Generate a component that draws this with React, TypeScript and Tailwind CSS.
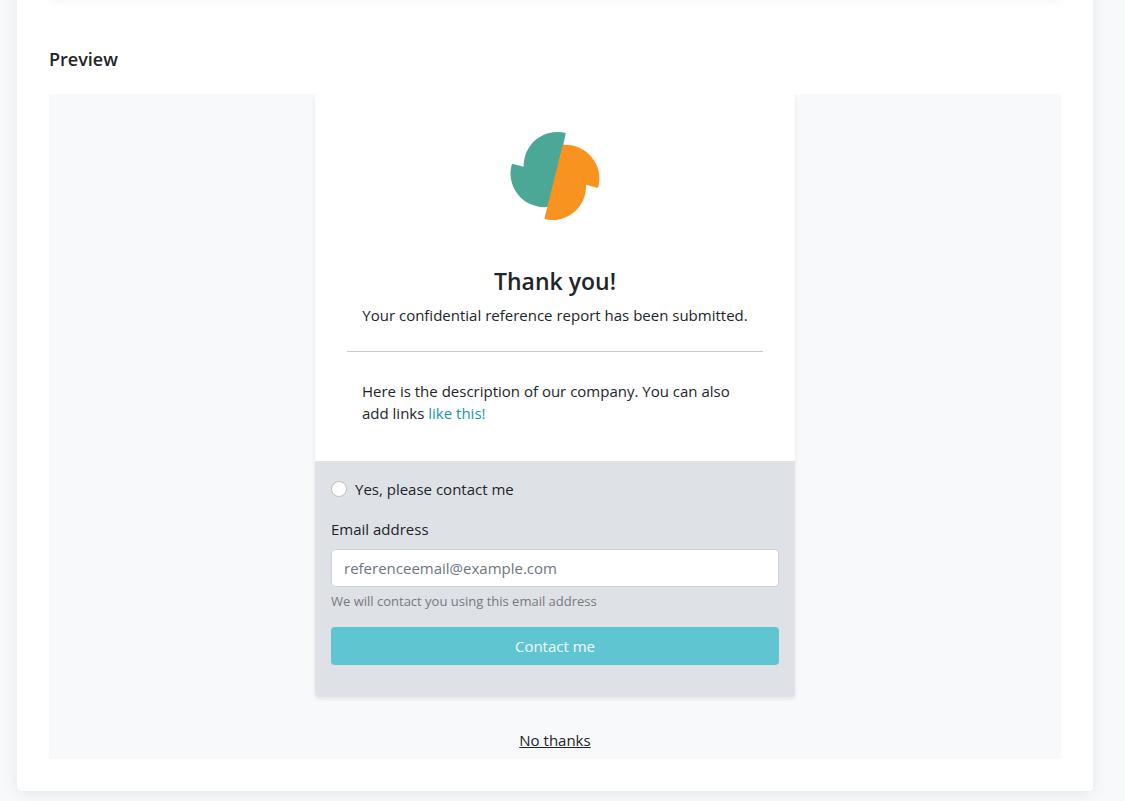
import { useState } from "react";

function Logo() {
  return (
    <svg width="90" height="91" viewBox="60 45 270 273" aria-hidden="true">
      <path
        fill="#4ca896"
        d="M227 54A101 101 0 0 0 101 155L66 146A101 101 0 0 0 172 276L188 255Z"
      />
      <path
        fill="#f9931f"
        d="M218 90A101 101 0 0 1 324 219L288 209A101 101 0 0 1 163 312Z"
      />
    </svg>
  );
}

function ContactForm() {
  const [email, setEmail] = useState("");

  return (
    <form
      className="rounded-b bg-[#dee1e6] px-4 pt-4 pb-8"
      onSubmit={(e) => e.preventDefault()}
    >
      <div className="flex h-6 items-center gap-2">
        <input
          id="contact"
          type="radio"
          className="size-4 appearance-none rounded-full border border-[#bfbfbf] bg-white checked:border-4 checked:border-[#5fc5d1]"
        />
        <label htmlFor="contact">Yes, please contact me</label>
      </div>

      <label htmlFor="email" className="mt-4 block">
        Email address
      </label>
      <input
        id="email"
        type="email"
        value={email}
        onChange={(e) => setEmail(e.target.value)}
        placeholder="referenceemail@example.com"
        aria-describedby="email-help"
        className="mt-2 block h-[38px] w-full rounded border border-[#ced4da] bg-white px-3 placeholder:text-[#6c757d]"
      />
      <p id="email-help" className="mt-1 text-[13px] leading-5 text-[#76797e]">
        We will contact you using this email address
      </p>

      <button
        type="submit"
        className="mt-4 block h-[38px] w-full rounded bg-[#5fc5d1] text-[#f1fafb]"
      >
        Contact me
      </button>
    </form>
  );
}

export default function App() {
  return (
    <div className="min-h-screen overflow-hidden bg-[#f8f9fb] pr-8 pb-2 pl-[17px] font-['Open_Sans','Noto_Sans',sans-serif] text-[15px] leading-6 text-[#212529]">
      <main className="rounded-b bg-white px-8 pb-8 shadow-[0_2px_16px_rgba(0,0,0,0.08)]">
        {/* Bottom edge of the settings card above */}
        <div className="-mt-8 h-8 bg-white shadow-[0_2px_8px_rgba(0,0,0,0.04)]" />

        <h2 className="mt-[47px] text-lg leading-6 font-semibold">Preview</h2>

        <section className="mt-[23px] bg-[#f8f9fb] pb-[7px]">
          <div className="mx-auto w-full max-w-[480px] rounded bg-white shadow-[0_2px_4px_rgba(0,0,0,0.08)]">
            <div className="px-8 pt-9 pb-[37px]">
              <div className="flex justify-center">
                <Logo />
              </div>
              <div className="mt-[42px] text-center">
                <h1 className="text-[23px] leading-9 font-semibold">
                  Thank you!
                </h1>
                <p className="mt-1">
                  Your confidential reference report has been submitted.
                </p>
              </div>
              <hr className="mt-6 border-[#c8c9ca]" />
              <p className="mt-7 px-[15px] leading-[22px]">
                Here is the description of our company. You can also add links{" "}
                <a href="#company" className="text-[#1797a0]">
                  like this!
                </a>
              </p>
            </div>

            <ContactForm />
          </div>

          <div className="mt-[31px] text-center">
            <a href="#no-thanks" className="underline">
              No thanks
            </a>
          </div>
        </section>
      </main>
    </div>
  );
}
